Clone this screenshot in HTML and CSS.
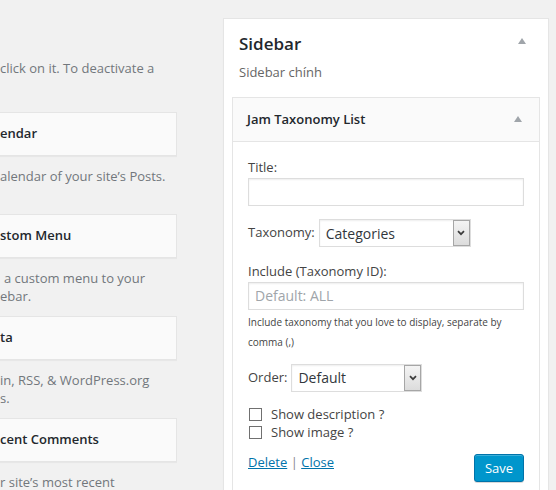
FILE: index.html
```html
<!DOCTYPE html>
<html>
<head>
<meta charset="utf-8">
<link rel="stylesheet" href="styles.css">
</head>
<body>
<div class="page">
  <div class="left">
    <p class="intro">click on it. To deactivate a</p>
    <div class="avail">
      <div class="wcard"><h3>endar</h3></div>
      <div class="wdesc">alendar of your site’s Posts.</div>
      <div class="wcard"><h3>stom Menu</h3></div>
      <div class="wdesc"><span class="ind">a custom menu to your</span><br>ebar.</div>
      <div class="wcard"><h3>ta</h3></div>
      <div class="wdesc">in, RSS, &amp; WordPress.org<br>s.</div>
      <div class="wcard"><h3>cent Comments</h3></div>
      <div class="wdesc wdesc-last">r site’s most recent</div>
    </div>
  </div>

  <div class="sidebar">
    <div class="sb-head">
      <h2>Sidebar</h2>
      <span class="tri tri-sb"></span>
    </div>
    <p class="sb-desc">Sidebar chính</p>

    <div class="widget">
      <div class="wtop">
        <h3>Jam Taxonomy List</h3>
        <span class="tri tri-w"></span>
      </div>
      <div class="wbody">
        <label class="lbl">Title:</label>
        <input class="field" type="text">

        <div class="row row-tax">
          <label class="lbl">Taxonomy:</label>
          <div class="sel sel-tax">
            <select><option>Categories</option></select>
            <span class="sel-btn"><svg width="8" height="6" viewBox="0 0 8 6"><path d="M1 1.2 L4 4.2 L7 1.2" stroke="#3c3c3c" stroke-width="1.7" fill="none"/></svg></span>
          </div>
        </div>

        <label class="lbl lbl-inc">Include (Taxonomy ID):</label>
        <input class="field" type="text" placeholder="Default: ALL">
        <p class="help"><small>Include taxonomy that you love to display, separate by comma (,)</small></p>

        <div class="row row-order">
          <label class="lbl">Order:</label>
          <div class="sel sel-order">
            <select><option>Default</option></select>
            <span class="sel-btn"><svg width="8" height="6" viewBox="0 0 8 6"><path d="M1 1.2 L4 4.2 L7 1.2" stroke="#3c3c3c" stroke-width="1.7" fill="none"/></svg></span>
          </div>
        </div>

        <div class="checks">
          <label class="chk"><input type="checkbox"><span>Show description ?</span></label>
          <label class="chk"><input type="checkbox"><span>Show image ?</span></label>
        </div>

        <div class="actions">
          <div class="links"><a href="#">Delete</a> <span class="sep">|</span> <a href="#">Close</a></div>
          <button class="save" type="button">Save</button>
        </div>
      </div>
    </div>
  </div>
</div>
</body>
</html>
```
FILE: styles.css
```css
* { box-sizing: border-box; }
html, body { margin: 0; height: 100%; }
body {
  background: #f1f1f1;
  font-family: "Open Sans", "Noto Sans", sans-serif;
  font-size: 13px;
  line-height: 1.5;
  color: #444;
  overflow: hidden;
}
.page { display: flex; align-items: flex-start; height: 100%; overflow: hidden; }

/* left column (clipped available widgets) */
.left { width: 177px; height: 100%; flex: none; padding-top: 59px; white-space: nowrap; overflow: hidden; }
.intro { margin: 0; color: #72777c; }
.avail { margin-top: 33.5px; }
.wcard {
  height: 44px;
  background: #fafafa;
  border: 1px solid #e5e5e5;
  border-left: none;
  box-shadow: 0 1px 1px rgba(0,0,0,.04);
  display: flex;
  align-items: center;
}
.wcard h3 { margin: 0; font-size: 13px; font-weight: 600; color: #23282d; }
.wdesc { height: 58px; padding-top: 11px; line-height: 18px; color: #72777c; }
.wdesc-last { height: 30px; }
.ind { padding-left: 4px; }

/* right sidebar */
.sidebar {
  margin-left: 46px;
  margin-top: 18px;
  width: 326px;
  height: calc(100% - 18px);
  background: #fff;
  border: 1px solid #e5e5e5;
  border-bottom: none;
  box-shadow: 0 1px 1px rgba(0,0,0,.04);
  padding: 0 8px;
  display: flex;
  flex-direction: column;
}
.sb-head { display: flex; justify-content: space-between; align-items: flex-start; padding-top: 14px; }
.sb-head h2 { margin: 0; padding-left: 7px; font-size: 17px; line-height: 22px; font-weight: 600; color: #23282d; }
.tri {
  width: 0; height: 0;
  border-left: 4px solid transparent;
  border-right: 4px solid transparent;
  border-bottom: 6px solid #a0a5aa;
}
.tri-sb { margin: 5px 14px 0 0; }
.sb-desc { margin: 8px 0 0; padding-left: 7px; line-height: 18px; color: #666; }

.widget { margin-top: 16px; flex: 1; min-height: 0; border: 1px solid #e5e5e5; border-bottom: none; background: #fff; overflow: hidden; }
.wtop {
  height: 44px;
  background: #fafafa;
  border-bottom: 1px solid #e5e5e5;
  display: flex;
  align-items: center;
  justify-content: space-between;
  padding: 0 17px 0 14px;
}
.wtop h3 { margin: 0; font-size: 13px; font-weight: 600; color: #23282d; }
.tri-w { margin-top: -2px; }

.wbody { padding: 16px 15px 0 15px; }
.lbl { display: block; color: #444; line-height: 19.5px; }
.field {
  display: block;
  width: 100%;
  height: 28px;
  margin: 0;
  border: 1px solid #ddd;
  box-shadow: inset 0 1px 2px rgba(0,0,0,.07);
  font-family: inherit;
  font-size: 14px;
  color: #32373c;
  padding: 0 6px;
  outline: none;
  background: #fff;
}
.field::placeholder { color: #a0a5aa; }

.row { display: flex; align-items: center; gap: 4px; }
.row-tax { margin-top: 13.5px; }
.row-order { margin-top: 11.5px; }
.lbl-inc { margin-top: 15px; }

.sel { position: relative; height: 28px; }
.sel-tax { width: 152px; }
.sel-order { width: 131px; }
.sel select {
  appearance: none;
  -webkit-appearance: none;
  width: 100%;
  height: 28px;
  margin: 0;
  border: 1px solid #ddd;
  box-shadow: inset 0 1px 2px rgba(0,0,0,.07);
  background: #fff;
  font-family: inherit;
  font-size: 14px;
  color: #32373c;
  padding: 0 6px;
  border-radius: 0;
  outline: none;
}
.sel-btn {
  position: absolute;
  right: 1px;
  top: 1px;
  width: 17px;
  height: 26px;
  border: 1px solid #a6a6a6;
  background: linear-gradient(#f4f4f4, #dcdcdc);
  display: flex;
  align-items: center;
  justify-content: center;
  pointer-events: none;
}

.help { margin: 2.5px 0 0; line-height: 19px; }
.help small { font-size: 10px; color: #444; }

.checks { margin-top: 14px; }
.chk { display: flex; align-items: center; height: 18px; color: #444; }
.chk input {
  appearance: none;
  -webkit-appearance: none;
  width: 13px;
  height: 13px;
  margin: 0 9px 0 1px;
  border: 1px solid #707070;
  background: #fff;
  border-radius: 0;
}

.actions { margin-top: 11px; display: flex; justify-content: space-between; align-items: flex-start; }
.links { line-height: 19.5px; }
.links a { color: #0073aa; text-decoration: underline; }
.sep { color: #888; }
.save {
  margin-top: 1px;
  height: 28px;
  width: 50px;
  padding: 0;
  border: 1px solid #0073aa;
  border-radius: 3px;
  background: #0096cc;
  box-shadow: inset 0 1px 0 rgba(120,200,230,.5), 0 1px 0 rgba(0,0,0,.15);
  color: #fff;
  font-family: inherit;
  font-size: 13px;
}
```
